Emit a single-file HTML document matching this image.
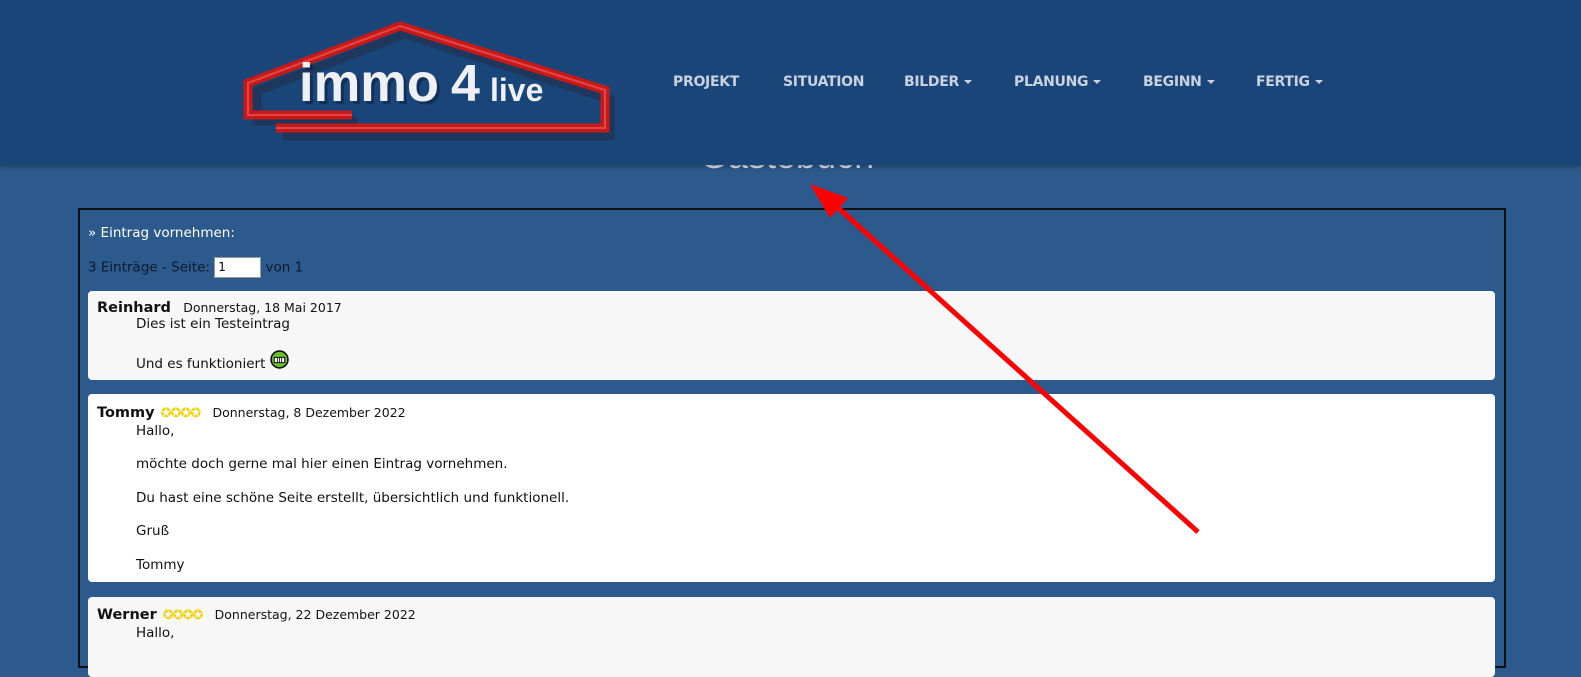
<!DOCTYPE html>
<html><head><meta charset="utf-8"><style>
*{margin:0;padding:0;box-sizing:border-box}
body{width:1581px;height:655px;overflow:hidden;background:#2c5a8c;font-family:"DejaVu Sans","Liberation Sans",sans-serif;position:relative}
.hdr{position:absolute;left:0;top:0;width:1581px;height:165px;background:#1a4579;box-shadow:0 2px 4px rgba(0,0,0,.3);z-index:2;overflow:hidden}
.nav{position:absolute;top:74px;font:bold 14px "DejaVu Sans",sans-serif;color:#c9d2de;letter-spacing:-.3px}
.nav span.c{display:inline-block;border-left:4px solid transparent;border-right:4px solid transparent;border-top:4px solid #c9d2de;vertical-align:middle;margin-left:5px}
.title{position:absolute;left:700px;top:135px;font:300 36px "Liberation Sans",sans-serif;color:#dde5ef;z-index:1}
.box{position:absolute;left:78px;top:208px;width:1428px;height:460px;border:2px solid #111}
.t{position:absolute;color:#fff;font-size:13.5px}
.card{position:absolute;left:88px;width:1407px;border-radius:4px;font-size:13.5px;color:#111}
.card b{font-size:14.5px}
.d{font-size:12.5px;margin-left:8px}
.body{margin-left:39px}
.st{color:#f2d20c;font-size:13px;letter-spacing:-1px;margin-left:6px}
</style></head><body>
<div class="title">Gästebuch</div>
<div class="hdr">
<svg style="position:absolute;left:240px;top:20px" width="385" height="125" viewBox="0 0 385 125">
<g fill="none" stroke-linejoin="miter">
<path d="M112 95 H12 V65 L160 8 L365 73 V110 H38" stroke="#222a40" stroke-width="9" opacity=".5" transform="translate(5,6)"/>
<path d="M112 95 H8 V63 L160 6 L365 70 V108 H36" stroke="#c41a1a" stroke-width="9"/>
<path d="M112 95 H8 V63 L160 6 L365 70 V108 H36" stroke="#ff6060" stroke-width="2" opacity=".6"/>
</g>
<text x="62" y="84" font-family="Liberation Sans,sans-serif" font-size="54" font-weight="bold" fill="#0d2244" opacity=".6" textLength="140" lengthAdjust="spacingAndGlyphs">immo</text>
<text x="59" y="81" font-family="Liberation Sans,sans-serif" font-size="54" font-weight="bold" fill="#eef0f4" textLength="140" lengthAdjust="spacingAndGlyphs">immo</text>
<text x="211" y="81" font-family="Liberation Sans,sans-serif" font-size="52" font-weight="bold" fill="#eef0f4">4</text>
<text x="250" y="81" font-family="Liberation Sans,sans-serif" font-size="32" font-weight="bold" fill="#eef0f4">live</text>
</svg>
<div class="nav" style="left:673px">PROJEKT</div>
<div class="nav" style="left:783px">SITUATION</div>
<div class="nav" style="left:904px">BILDER<span class="c"></span></div>
<div class="nav" style="left:1014px">PLANUNG<span class="c"></span></div>
<div class="nav" style="left:1143px">BEGINN<span class="c"></span></div>
<div class="nav" style="left:1256px">FERTIG<span class="c"></span></div>
</div>
<div class="box"></div>
<div class="t" style="left:88px;top:225px">» Eintrag vornehmen:</div>
<div class="t" style="left:88px;top:257px;color:#0c1a2e">3 Einträge - Seite: <span style="display:inline-block;width:47px;height:21px;background:#fff;border:1px solid #999;vertical-align:middle;font-size:12px;padding:2px 3px;color:#000">1</span> von 1</div>
<div class="card" style="top:291px;height:89px;background:#f7f7f7;padding:9px 9px">
<b>Reinhard</b> <span class="d">Donnerstag, 18 Mai 2017</span>
<div class="body" style="margin-top:0">Dies ist ein Testeintrag</div>
<div class="body" style="margin-top:18px">Und es funktioniert <svg width="19" height="19" viewBox="0 0 18 18" style="vertical-align:-1px"><circle cx="9" cy="9" r="8" fill="#6cc02a" stroke="#111" stroke-width="1.5"/><rect x="4" y="7" width="10" height="5" fill="#fff" stroke="#111"/><path d="M7 7v5M9 7v5M11 7v5" stroke="#111" stroke-width=".8"/></svg></div>
</div>
<div class="card" style="top:394px;height:188px;background:#fff;padding:10px 9px;line-height:17.5px">
<b>Tommy</b><span class="st">✪✪✪✪</span> <span class="d">Donnerstag, 8 Dezember 2022</span>
<div class="body">Hallo,</div>
<div class="body" style="margin-top:16px">möchte doch gerne mal hier einen Eintrag vornehmen.</div>
<div class="body" style="margin-top:16px">Du hast eine schöne Seite erstellt, übersichtlich und funktionell.</div>
<div class="body" style="margin-top:16px">Gruß</div>
<div class="body" style="margin-top:16px">Tommy</div>
</div>
<div class="card" style="top:597px;height:80px;background:#f7f7f7;padding:9px 9px;line-height:17.5px">
<b>Werner</b><span class="st">✪✪✪✪</span> <span class="d">Donnerstag, 22 Dezember 2022</span>
<div class="body">Hallo,</div>
</div>
<svg style="position:absolute;left:0;top:0;z-index:3" width="1581" height="655">
<line x1="1198" y1="532" x2="835" y2="205" stroke="#f00" stroke-width="5"/>
<polygon points="810,184 848,198 830,218" fill="#f00"/>
</svg>
</body></html>
